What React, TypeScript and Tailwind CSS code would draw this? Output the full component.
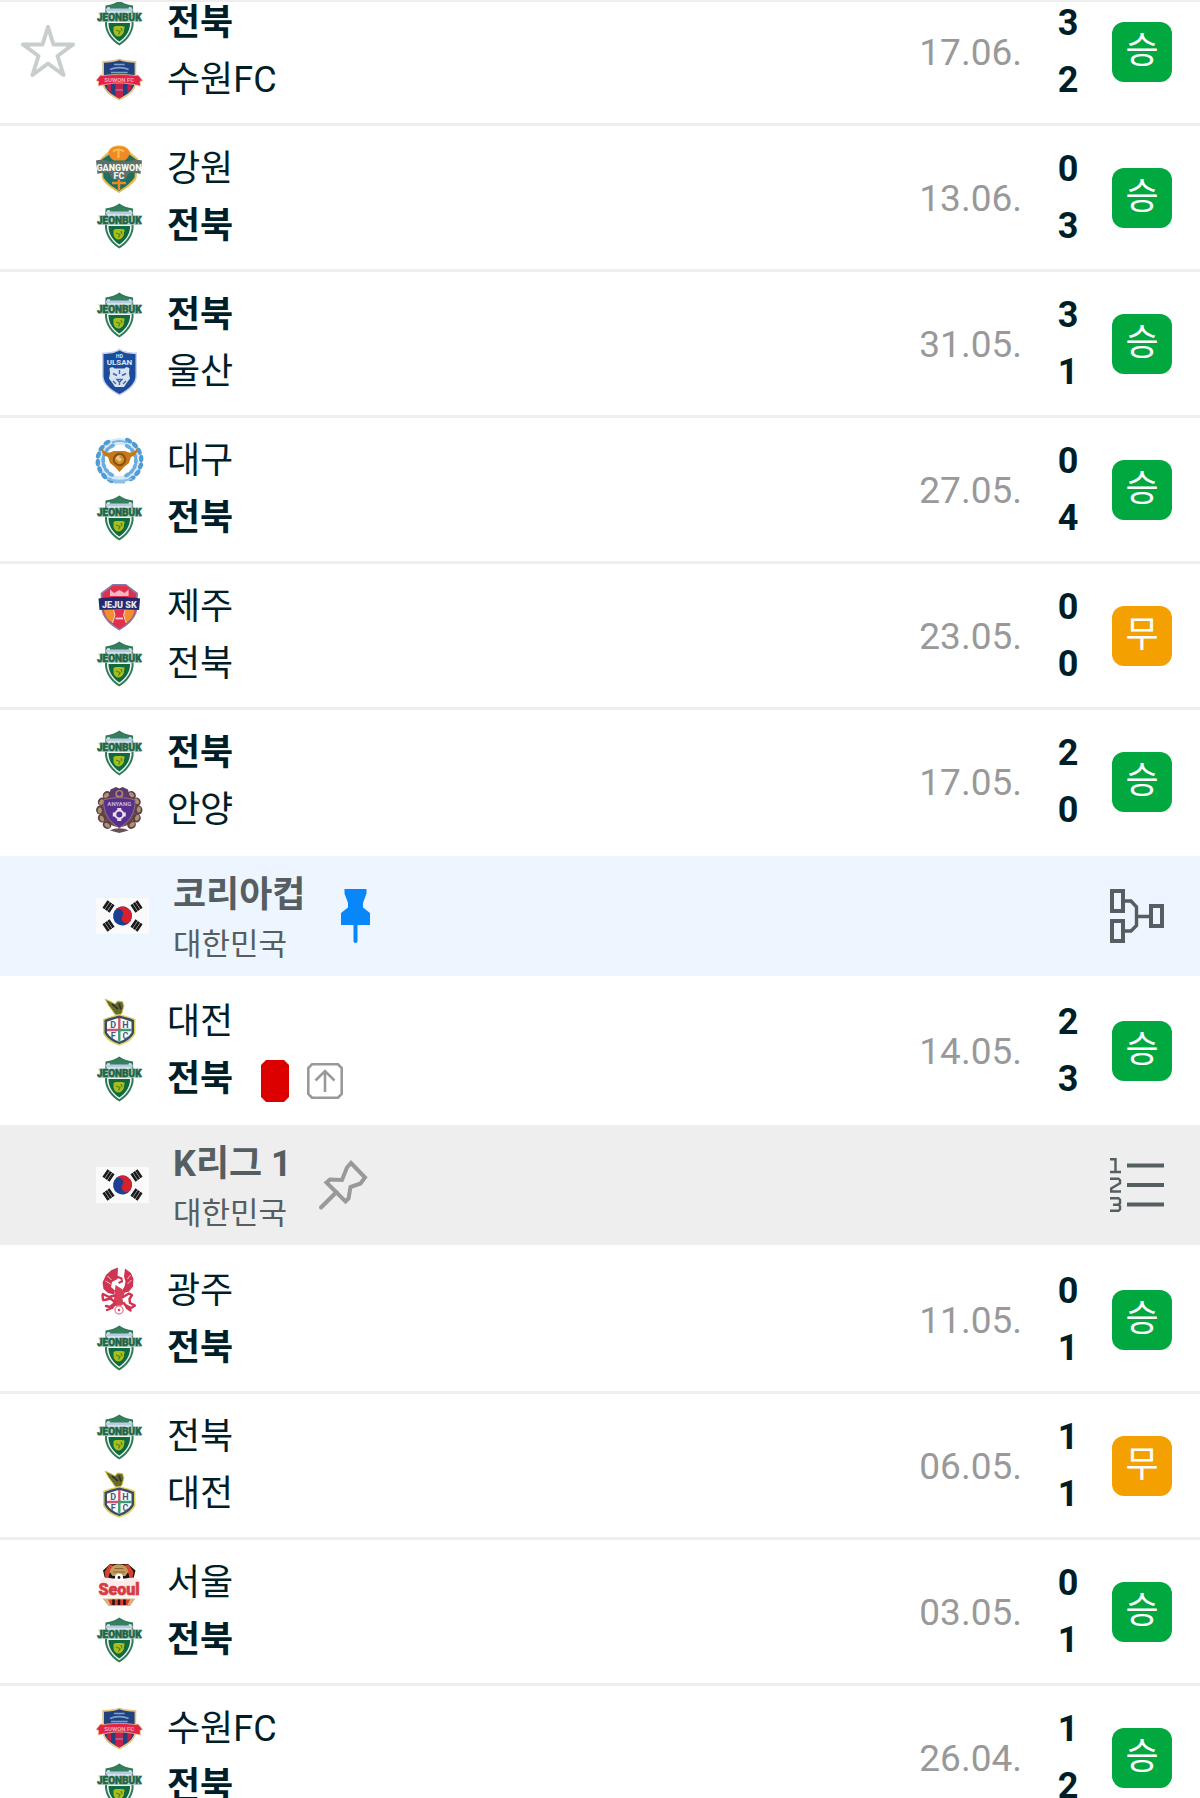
import React from 'react';

type TeamId =
  | 'jeonbuk'
  | 'suwon'
  | 'gangwon'
  | 'ulsan'
  | 'daegu'
  | 'jeju'
  | 'anyang'
  | 'daejeon'
  | 'gwangju'
  | 'seoul';

interface Side {
  team: TeamId;
  score: number;
  winner?: boolean;
  redCard?: boolean;
  advanced?: boolean;
}

interface Match {
  date: string;
  home: Side;
  away: Side;
  result: 'win' | 'draw';
  starred?: boolean;
}

interface League {
  name: string;
  country: string;
  pinned: boolean;
  view: 'bracket' | 'table';
}

const TEAM_NAMES: Record<TeamId, string> = {
  jeonbuk: '전북',
  suwon: '수원FC',
  gangwon: '강원',
  ulsan: '울산',
  daegu: '대구',
  jeju: '제주',
  anyang: '안양',
  daejeon: '대전',
  gwangju: '광주',
  seoul: '서울',
};

const SECTIONS: { league?: League; matches: Match[] }[] = [
  {
    matches: [
      { date: '17.06.', home: { team: 'jeonbuk', score: 3, winner: true }, away: { team: 'suwon', score: 2 }, result: 'win', starred: true },
      { date: '13.06.', home: { team: 'gangwon', score: 0 }, away: { team: 'jeonbuk', score: 3, winner: true }, result: 'win' },
      { date: '31.05.', home: { team: 'jeonbuk', score: 3, winner: true }, away: { team: 'ulsan', score: 1 }, result: 'win' },
      { date: '27.05.', home: { team: 'daegu', score: 0 }, away: { team: 'jeonbuk', score: 4, winner: true }, result: 'win' },
      { date: '23.05.', home: { team: 'jeju', score: 0 }, away: { team: 'jeonbuk', score: 0 }, result: 'draw' },
      { date: '17.05.', home: { team: 'jeonbuk', score: 2, winner: true }, away: { team: 'anyang', score: 0 }, result: 'win' },
    ],
  },
  {
    league: { name: '코리아컵', country: '대한민국', pinned: true, view: 'bracket' },
    matches: [
      {
        date: '14.05.',
        home: { team: 'daejeon', score: 2 },
        away: { team: 'jeonbuk', score: 3, winner: true, redCard: true, advanced: true },
        result: 'win',
      },
    ],
  },
  {
    league: { name: 'K리그 1', country: '대한민국', pinned: false, view: 'table' },
    matches: [
      { date: '11.05.', home: { team: 'gwangju', score: 0 }, away: { team: 'jeonbuk', score: 1, winner: true }, result: 'win' },
      { date: '06.05.', home: { team: 'jeonbuk', score: 1 }, away: { team: 'daejeon', score: 1 }, result: 'draw' },
      { date: '03.05.', home: { team: 'seoul', score: 0 }, away: { team: 'jeonbuk', score: 1, winner: true }, result: 'win' },
      { date: '26.04.', home: { team: 'suwon', score: 1 }, away: { team: 'jeonbuk', score: 2, winner: true }, result: 'win' },
    ],
  },
];

/* Club crests, all drawn on a 48 x 48 grid */

const JeonbukCrest = () => (
  <>
    <path d="M23.3 1.5C20 4 15 6 9.5 6.5L9 26c1 9 7 16 14.300 20.500C30.600 42 36.600 35 37.600 26L37 6.500C31.600 6 26.600 4 23.300 1.500Z" fill="#2f7a58" />
    <path d="M23.300 4.500C20 6.500 15 8 11 8.500V26c1 8 6 14 12.300 18.300C29.600 40 34.600 34 35.600 26V8.500C31.600 8 26.600 6.500 23.300 4.500Z" fill="#eef5f1" />
    <path d="M23.300 3.500C20.500 5.500 17 7 13.500 7.500L14 10h18.600l.5-2.500C29.600 7 26 5.500 23.300 3.500Z" fill="#357f5d" />
    <rect x="10" y="9.500" width="26.600" height="3" fill="#b9cbe4" />
    <path d="M12.500 24h21.600C34 33 29 38.500 23.300 42.500 17.500 38.500 12.600 33 12.500 24Z" fill="#0f6a3e" />
    <path d="M2 13.500h42.600l-2 4 2.500 5.500H1.700l2.500-5.500Z" fill="#b9d2c6" />
    <text x="23.300" y="22" textAnchor="middle" fontSize="10" fontWeight="900" fill="#1f6546" stroke="#1f6546" strokeWidth=".5">JEONBUK</text>
    <path d="M17.500 28c2-1.500 3.500-1 5-1 2 0 4-.5 6 .5.5 2-1 3-.5 5-1 3-3 4.500-5 5-3 0-5-2-5.500-5Z" fill="#a9bd1c" />
    <path d="M20 31l4 1.500-1.500 3M25 29l1 3" stroke="#47861f" strokeWidth="1.200" fill="none" />
  </>
);

const SuwonCrest = () => (
  <>
    <path d="M23.300 2.500c3 1.500 10 2.500 17 2.500v22c-1 9-9 13.500-17 17.500-8-4-16-8.500-17-17.500V5c7 0 14-1 17-2.500Z" fill="#e5c682" />
    <path d="M23.300 4.200C27 5.500 33 6.500 38.600 6.700V27c-1 7.500-8 11.700-15.300 15.500C16 38.700 9 34.500 8 27V6.700C13.600 6.500 19.600 5.500 23.300 4.200Z" fill="#22427f" />
    <path d="M10.500 27h4.500v10l-3.500-4ZM19.500 27h7.500v13.500l-3.700 2-3.800-2ZM31.500 27H36l-1 6-3.500 4Z" fill="#c61f4b" />
    <path d="M18 8.500h10.600M14 13.500c5-2.500 13.600-2.500 18.600 0M15 16.500h16.600" stroke="#7f9fcc" strokeWidth="1.600" fill="none" />
    <path d="M0 24.500 4.500 19l3.500.5c9-1.500 21.600-1.500 30.600 0l3.500-.5 4.600 5.500-2.700 1 .5 4.500-7-1.500c-9-2-19.400-2-28.400 0l-7 1.500.5-4.500Z" fill="#e22547" stroke="#efcf8e" strokeWidth=".7" />
    <text x="23.300" y="25.500" textAnchor="middle" fontSize="6" fontWeight="700" fill="#f8a8b6">SUWON FC</text>
    <path d="M19.500 34h7.600" stroke="#8aa3cf" strokeWidth="1" />
  </>
);

const GangwonCrest = () => (
  <>
    <path d="M23 .5c5 0 9 2 11 6.500L42 13.500l-1.500 20C36 40.500 29 44 23 48 17 44 9.500 40.500 6 33.500L4.500 13.500 12 7C14 2.500 18 .5 23 .5Z" fill="#eab94e" />
    <path d="M13 9.500h20.500l6.500 5-1.500 18C34 39 28.500 42 23 46 17.500 42 11.500 39 7.500 32.500l-1.500-18Z" fill="#1f6f60" />
    <path d="M12.500 7.500C14 3 18 1.500 23 1.500s9 1.500 11 6.500c-1 3-2.500 6-5.500 7.500H18C14.500 13.500 13 11 12.500 7.500Z" fill="#f08a24" />
    <path d="M17 6.500c3-3 8-2.500 11 0M22.500 5v8" stroke="#fbbd52" strokeWidth="2" fill="none" />
    <path d="M0 15.500c5-1.500 10-.5 14 1h18c4-1.500 9-2.500 14-1l-1.500 13.500c-4-1-8-1.500-11-1.500l-4.500 7H17l-4.500-7c-4 0-7.500.5-11 1.500Z" fill="#5d7069" />
    <text x="23" y="26" textAnchor="middle" fontSize="9" fontWeight="900" fill="#f4f7f5">GANGWON</text>
    <text x="23" y="34" textAnchor="middle" fontSize="9" fontWeight="900" fill="#eef3f1">FC</text>
    <path d="M23 34.500v10.500M16 38h14" stroke="#ee8a25" strokeWidth="2.500" />
  </>
);

const UlsanCrest = () => (
  <>
    <path d="M23.500.5c4 3 11 4 17.500 4V28c0 8-8 15-17.500 19.700C14 43 6 36 6 28V4.500c6.500 0 13.500-1 17.500-4Z" fill="#c5d2ea" />
    <path d="M23.500 2.500c4 2.500 10.500 3.500 16 3.600V28c0 7-7 13.500-16 18-9-4.500-16-11-16-18V6.100c5.500-.1 12-1.100 16-3.600Z" fill="#1b4c9c" />
    <text x="23.500" y="10" textAnchor="middle" fontSize="5" fontWeight="700" fill="#dce6f5">HD</text>
    <text x="23.500" y="16.500" textAnchor="middle" fontSize="8" fontWeight="700" fill="#dce6f5">ULSAN</text>
    <path d="M13.500 20.500c2-2 4-1 5 0h10c1-1 3-2 5 0l-.5 5 1 5-3 4-3 4.500h-9l-3-4.500-3-4 1-5Z" fill="#d7e2f2" />
    <path d="M17 25.500l4 2M30 25.500l-4 2M23.500 22v4M21 31.500h5l-2.500 3ZM17 33l3 3M30 33l-3 3M23.500 34v3" stroke="#3a66ab" strokeWidth="1.400" fill="none" />
  </>
);

const DAEGU_LEAVES = [-150, -130, -110, -90, -70, -50, -30, 30, 50, 70, 90, 110, 130, 150];

const DaeguCrest = () => (
  <>
    <circle cx="23.500" cy="23.500" r="19" fill="none" stroke="#d5e9f8" strokeWidth="7" />
    {DAEGU_LEAVES.map((angle) => (
      <g key={angle} transform={`rotate(${angle} 23.500 23.500)`}>
        <ellipse cx="21.500" cy="1.800" rx="3.800" ry="2.200" fill="#4f9bd6" />
        <ellipse cx="24" cy="7.200" rx="3.400" ry="1.900" fill="#6aace0" />
      </g>
    ))}
    <path d="M16 5.500c5-2 10-2 15 0" stroke="#7db5e0" strokeWidth="2" fill="none" />
    <path d="M11 41.500c8 3 17 3 25 0M18 45.500h11" stroke="#8ebfe6" strokeWidth="2" fill="none" />
    <path d="M6 10.500c1 4 4 5 8 5l4-1.500h11l4 1.500c4 0 7-1 8-5 1.500 4-1 8-6 9.500L33 26l-5 4-4.500 5-4.500-5-5-4-2-6c-5-1.500-7.500-5.500-6-9.500Z" fill="#c47a1b" />
    <circle cx="23.500" cy="22.500" r="5.500" fill="#e7c791" stroke="#8c5412" strokeWidth="2.500" />
    <path d="M23.500 19.500a3 3 0 1 1-3 3" stroke="#e08b12" strokeWidth="2" fill="none" />
  </>
);

const JejuCrest = () => (
  <>
    <path d="M16.500 1h13.600L42 10l-1 18c-2 8-9 14.500-17.700 19.500C14.600 42.500 7.600 36 5.600 28l-1-18Z" fill="#8b7aa8" />
    <path d="M17 2.500h12.600L40.300 11l-.8 17c-2 7-8.200 13-16.200 17.800C15.300 41 9.100 35 7.100 28l-.8-17Z" fill="#e0304e" />
    <path d="M14 6.500 18 10l5.300-3 5.300 3 4-3.500V13H14Z" fill="#f5b7c1" />
    <path d="M8 27h9.500l1.500 5-2.500 8C12 37 9 33 8 27ZM38.600 27h-9.500l-1.500 5 2.500 8c4.500-3 7.500-7 8.500-13Z" fill="#f0902f" />
    <path d="M17.500 27 19 32l-2.500 8M29.100 27l-1.500 5 2.500 8" stroke="#f7d3d6" strokeWidth="1" fill="none" />
    <path d="M2.500 15.500c13-2 28.600-2 41.600 0l-1 11.500c-13-1.500-26.600-1.500-39.600 0Z" fill="#25286b" />
    <text x="23.300" y="24.500" textAnchor="middle" fontSize="9" fontWeight="900" fill="#e4e6f4">JEJU SK</text>
    <path d="M19.500 35.500h7.600" stroke="#f7c9cf" strokeWidth="1.800" />
  </>
);

const ANYANG_LEAVES = [-140, -115, -90, -65, -40, 40, 65, 90, 115, 140];

const AnyangCrest = () => (
  <>
    <circle cx="23.300" cy="24" r="17" fill="#6d5048" />
    {ANYANG_LEAVES.map((angle) => (
      <g key={angle} transform={`rotate(${angle} 23.300 24)`}>
        <ellipse cx="23.300" cy="5" rx="4.500" ry="4.200" fill="#5b3f4c" />
        <ellipse cx="22.800" cy="4.500" rx="3" ry="2" fill="#b48f6c" />
      </g>
    ))}
    <path d="M14.500 3.500 20 1l3.300 1.500L26.600 1 32 3.500l2 8H12.600Z" fill="#5c3b6b" />
    <circle cx="23.300" cy="8" r="4" fill="#a9846d" />
    <circle cx="23.300" cy="7.500" r="2.300" fill="#5b2f7c" />
    <path d="M7.500 14c10-3 21.600-3 31.600 0 0 13-5 21-15.800 28C12.500 35 7.500 27 7.500 14Z" fill="#56308a" stroke="#8d6d90" strokeWidth="1" />
    <text x="23.300" y="19.500" textAnchor="middle" fontSize="6" fontWeight="700" fill="#c9b5dd">ANYANG</text>
    <path d="M23.300 22v13M16.800 28.500h13" stroke="#e8def2" strokeWidth="4" />
    <circle cx="23.300" cy="28.500" r="4" fill="#56308a" stroke="#e8def2" strokeWidth="2" />
    <path d="M14 44.500c5-3 13.600-3 18.600 0l-9.300 2.500Z" fill="#6a4f54" />
  </>
);

const DaejeonCrest = () => (
  <>
    <path d="M9 1 15.500 4l3.500 2L21.500 3l5 .5L28 8l-2 7-3 3-4-1.500L16 12l-3.500-4.500Z" fill="#6c6a2b" stroke="#d8cf4e" strokeWidth="1" />
    <path d="M16 6l6 5M23 5.500l2 6" stroke="#2c3a36" strokeWidth="2" />
    <path d="M23.300 16c6 1.500 11 3 16.200 5v14.500c-3 6.500-9 10-16.200 12.200C16 45.500 10 42 7 35.500V21c5.300-2 10.300-3.500 16.300-5Z" fill="#ddd560" />
    <path d="M23.300 17.500c5.500 1.300 10 2.700 14.700 4.500v13c-3 5.500-8 8.800-14.700 11C16.600 43.800 11.500 40.500 8.500 35V22c4.800-1.800 9.300-3.200 14.800-4.500Z" fill="#3c4a69" />
    <path d="M23.300 20c4.500 1 8.500 2.200 12.200 3.700v10.800c-2.500 4.500-6.500 7.200-12.200 9.200C17.600 41.700 13.500 39 11 34.500V23.700c3.800-1.500 7.800-2.700 12.300-3.700Z" fill="#fafcfc" />
    <path d="M23.300 20v12H11" stroke="#d0556a" strokeWidth="2.400" fill="none" />
    <path d="M23.300 43.500V32h12.200" stroke="#3b9a77" strokeWidth="2.400" fill="none" />
    <text x="17.300" y="30" textAnchor="middle" fontSize="9" fontWeight="700" fill="#48587c">D</text>
    <text x="29.500" y="30" textAnchor="middle" fontSize="9" fontWeight="700" fill="#48587c">H</text>
    <text x="17.300" y="40.500" textAnchor="middle" fontSize="9" fontWeight="700" fill="#48587c">F</text>
    <text x="29.500" y="40.500" textAnchor="middle" fontSize="9" fontWeight="700" fill="#48587c">C</text>
  </>
);

const GwangjuCrest = () => (
  <>
    <path d="M22 .5 15.500 3 10 8l-3.500 7.500 1 6.500 4.500 4 6 1.500 1-4-4-3.500 1-5 5.500-3Z" fill="#cf3552" />
    <path d="M29 1.500 28 9.500l1.500 5-1 5-2.500 4 2 2.500 5-1.500 4-5 .5-7.500-2.500-6Z" fill="#cf3552" />
    <path d="M18 12.500l4-2.500 3.500 1.500.5 3-3.500 1.500" stroke="#cf3552" strokeWidth="2" fill="none" />
    <path d="M19.500 18 26 22l2.500 4.500-2 5 1 5.500-4.500 3-6-2 1-5.500Z" fill="#d7405b" />
    <path d="M7 27l6 3 6-1.500M8.500 33l6-1.500 5 4-5.500 4.500-4-1M27 30l6-3.500 3 1.500-2.500 4 .500 4 5 2.500-4 2.500-6.500-3.500M11 43l5-2 3-4M28 36l3 5 3.500 2.500M6.500 28l.5 5" stroke="#cf3552" strokeWidth="2.400" fill="none" strokeLinecap="round" strokeLinejoin="round" />
    <path d="M9.500 14l5 3M11.500 9l4 4M35.500 13l-4 4M34.500 8l-3 4" stroke="#f3c4cd" strokeWidth="1" />
    <circle cx="23" cy="43" r="4" fill="#fff" stroke="#e58b9b" strokeWidth="1.500" />
    <path d="M23 41.500l1.500 1.500-1.500 1.500-1.500-1.500Z" fill="#cf3552" />
  </>
);

const SeoulCrest = () => (
  <>
    <path d="M14 5h18l7.500 6.500-2 8H9l-2-8Z" fill="#1d1413" />
    <path d="M13 6l4-1-4.500 13H9.500l-1-5ZM33 6l-4-1 4.500 13h3l1-5Z" fill="#d5432f" />
    <path d="M16 7.500c4-3 10-3 14 0l2.500 5-3 4.500h-13l-3-4.500Z" fill="#c69a5f" />
    <path d="M18.500 9.500h9M17 13h12" stroke="#8b6232" strokeWidth="1.200" />
    <circle cx="23" cy="18.500" r="4" fill="#fff" />
    <circle cx="23" cy="18.500" r="1.400" fill="#222" />
    <path d="M4 20c5-2 9-2 12 0 4 3 10 3 14 0 3-2 7-2 11.700 0V37.500H4Z" fill="#fbeceb" />
    <text x="23" y="35.500" textAnchor="middle" fontSize="16" fontWeight="900" fill="#d63a43" stroke="#d63a43" strokeWidth=".6">Seoul</text>
    <path d="M6.500 39.500h33L34 47H12.500Z" fill="#d9b179" />
    <path d="M12 40.500h22l-2.500 5.500H14.500Z" fill="#d5432f" />
    <path d="M17.500 40.500v5.500M23 40.500v5.500M28.500 40.500v5.500" stroke="#1d1413" strokeWidth="2.500" />
  </>
);

const CRESTS: Record<TeamId, React.FC> = {
  jeonbuk: JeonbukCrest,
  suwon: SuwonCrest,
  gangwon: GangwonCrest,
  ulsan: UlsanCrest,
  daegu: DaeguCrest,
  jeju: JejuCrest,
  anyang: AnyangCrest,
  daejeon: DaejeonCrest,
  gwangju: GwangjuCrest,
  seoul: SeoulCrest,
};

/* Icons */

const StarIcon = () => (
  <svg viewBox="0 0 54 54" className="size-[54px]" fill="none" stroke="#c8cdcd" strokeWidth="4" strokeLinejoin="round">
    <path d="M27 2 32.500 19.500H52L36.500 31 42.500 50 27 38.500 11.500 50 17.500 31 2 19.500H21.500Z" />
  </svg>
);

const PinFilledIcon = () => (
  <svg viewBox="0 0 54 54" className="size-[54px]" fill="#0787fa">
    <path d="M15.500 0h22v4.500L34 14v4.500l7 5.500v12H12V24l7-5.500V14L15.500 4.500Z" />
    <path d="M26.500 34v18" stroke="#0787fa" strokeWidth="4" strokeLinecap="round" />
  </svg>
);

const PinOutlineIcon = () => (
  <svg viewBox="0 0 54 54" className="size-[54px]" fill="none" stroke="#999" strokeWidth="4">
    <path d="M35 5 49 19.500 44.500 25.500 34.500 29 32.500 40.500 29.500 43.500 10.500 24.500 14 21.500 26 22 31 9.500Z" />
    <path d="M20.500 34 5 49.500" strokeLinecap="round" />
  </svg>
);

const BracketIcon = () => (
  <svg viewBox="0 0 54 54" className="size-[54px]" fill="none" stroke="#555e61" strokeWidth="4">
    <path d="M2 2h11v20H2ZM2 32h11v20H2ZM41 17h11v20H41Z" />
    <path d="M15 12h6l5.500 6v18.500L21 42H15M26.500 27.500H39" strokeWidth="3.400" />
  </svg>
);

const TableIcon = () => (
  <svg viewBox="0 0 54 54" className="size-[54px]" fill="none" stroke="#555e61">
    <path d="M17 7.500h37M17 27h37M17 46.500h37" strokeWidth="4" />
    <path d="M0 1.200h5.500V14M0 14h11M0 20.700h8.500l1.500 1.500v3L1.200 30.500v3H11M0 40.200h8.500l1.500 1.500v3.500l-1.500 1.500H3M8.500 46.700l1.500 1.500v3l-1.500 1.600H0" strokeWidth="2.400" />
  </svg>
);

const AdvancedIcon = () => (
  <svg viewBox="0 0 36 36" className="size-9" fill="none" stroke="#999" strokeWidth="2.600" role="img" aria-label="진출">
    <path d="M5 1.300h26l3.700 3.700v26L31 34.700H5L1.300 31V5Z" />
    <path d="M18 29V8M8.500 17.500 18 8l9.500 9.500" />
  </svg>
);

const RedCardIcon = () => (
  <svg viewBox="0 0 28 42" className="h-[42px] w-7" fill="#dc0000" role="img" aria-label="레드카드">
    <path d="M5 0h18l5 5v32l-5 5H5l-5-5V5Z" />
  </svg>
);

const Trigram = ({ x, y, angle }: { x: number; y: number; angle: number }) => (
  <g transform={`translate(${x} ${y}) rotate(${angle})`}>
    <path d="M-4.500-3h9M-4.500 0h9M-4.500 3h9" stroke="#1a1a1a" strokeWidth="2.600" />
  </g>
);

const KoreaFlag = () => (
  <svg viewBox="0 0 53 36" className="h-9 w-[53px]" role="img" aria-label="대한민국">
    <rect width="53" height="36" fill="#fafafa" />
    <g transform="rotate(32 26.500 18)">
      <circle cx="26.500" cy="18" r="9.500" fill="#1c3f94" />
      <path d="M17 18a9.500 9.500 0 0 1 19 0 4.750 4.750 0 0 1-9.500 0 4.750 4.750 0 0 0-9.500 0Z" fill="#d6202c" />
    </g>
    <Trigram x={12.5} y={8.5} angle={-56} />
    <Trigram x={40.5} y={8.5} angle={56} />
    <Trigram x={12.5} y={27.5} angle={56} />
    <Trigram x={40.5} y={27.5} angle={-56} />
  </svg>
);

const TeamLine: React.FC<{ side: Side }> = ({ side }) => {
  const Crest = CRESTS[side.team];
  return (
    <div className="flex h-[57px] items-center">
      <svg viewBox="0 0 48 48" className="size-12 shrink-0 overflow-visible" aria-hidden="true">
        <Crest />
      </svg>
      <span className={`ml-[23px] text-[36px] leading-[44px] ${side.winner ? 'font-bold' : 'font-normal'}`}>
        {TEAM_NAMES[side.team]}
      </span>
      {side.redCard && (
        <span className="ml-7 flex items-center gap-[18px] pt-1">
          <RedCardIcon />
          {side.advanced && <AdvancedIcon />}
        </span>
      )}
    </div>
  );
};

const MatchRow: React.FC<{ match: Match }> = ({ match }) => (
  <li className="flex h-[146px] items-center border-b-[3px] border-[#eeeeee] pr-7 last:border-transparent">
    <div className="flex w-24 shrink-0 justify-center">
      {match.starred && (
        <button type="button" aria-label="즐겨찾기">
          <StarIcon />
        </button>
      )}
    </div>
    <div className="min-w-0 flex-1">
      <TeamLine side={match.home} />
      <TeamLine side={match.away} />
    </div>
    <time className="pt-0.5 text-[37px] text-[#999999]">{match.date}</time>
    <div className="ml-6 w-11 text-center text-[36px] font-bold">
      <div className="leading-[57px]">{match.home.score}</div>
      <div className="leading-[57px]">{match.away.score}</div>
    </div>
    <span
      className={`ml-[22px] flex size-[60px] items-center justify-center rounded-xl pb-0.5 text-[36px] leading-none text-white ${
        match.result === 'win' ? 'bg-[#00a83f]' : 'bg-[#f3a000]'
      }`}
    >
      {match.result === 'win' ? '승' : '무'}
    </span>
  </li>
);

const LeagueHeader: React.FC<{ league: League }> = ({ league }) => (
  <header
    className={`flex h-[120px] items-center pr-9 pl-24 text-[#555e61] ${league.pinned ? 'bg-[#edf5ff]' : 'bg-[#eeeeee]'}`}
  >
    <KoreaFlag />
    <div className="ml-6 pt-2">
      <h2 className="text-[36px] leading-[50px] font-bold">{league.name}</h2>
      <p className="text-[31px] leading-[50px]">{league.country}</p>
    </div>
    <button type="button" className="ml-6" aria-label={league.pinned ? '고정 해제' : '고정'}>
      {league.pinned ? <PinFilledIcon /> : <PinOutlineIcon />}
    </button>
    <button type="button" className="ml-auto" aria-label={league.view === 'bracket' ? '대진표' : '순위표'}>
      {league.view === 'bracket' ? <BracketIcon /> : <TableIcon />}
    </button>
  </header>
);

export default function App() {
  return (
    <main className="h-screen overflow-hidden border-t-2 border-[#eeeeee] bg-white font-[Roboto,'Noto_Sans_CJK_KR',sans-serif] text-[#001e28]">
      {/* The list is scrolled a little, so the first row starts above the edge */}
      <div className="-mt-[25px]">
        {SECTIONS.map(({ league, matches }, i) => (
          <section key={i}>
            {league && <LeagueHeader league={league} />}
            <ul className="pt-[3px]">
              {matches.map((match) => (
                <MatchRow key={match.date} match={match} />
              ))}
            </ul>
          </section>
        ))}
      </div>
    </main>
  );
}
